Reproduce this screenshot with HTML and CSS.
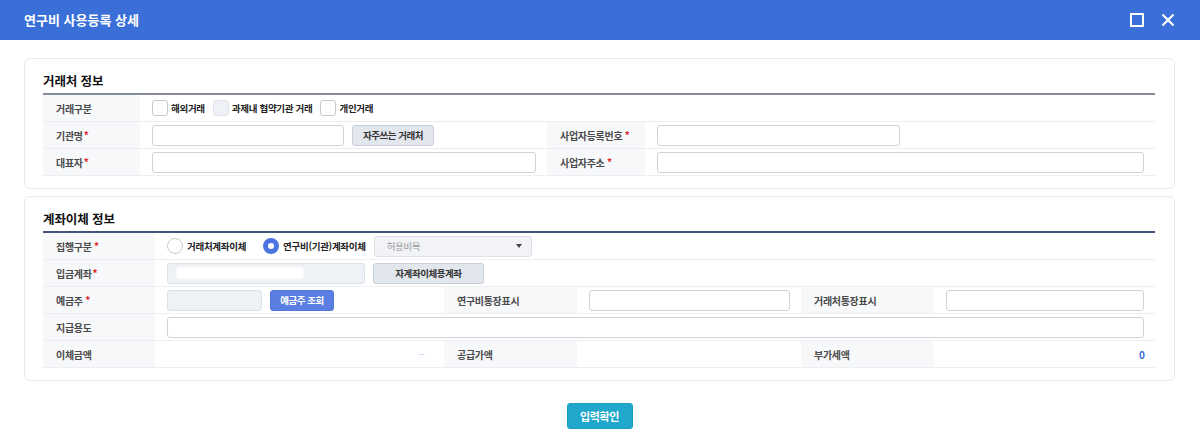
FILE: index.html
```html
<!DOCTYPE html>
<html lang="ko">
<head>
<meta charset="utf-8">
<title>연구비 사용등록 상세</title>
<link rel="stylesheet" href="styles.css">
</head>
<body>
<div class="dialog">
  <header class="titlebar">
    <h1>연구비 사용등록 상세</h1>
    <div class="win-actions">
      <svg width="14" height="14" viewBox="0 0 14 14"><rect x="1" y="1" width="12" height="12" fill="none" stroke="#fff" stroke-width="2"/></svg>
      <svg width="14" height="14" viewBox="0 0 14 14"><path d="M1.5 1.5L12.5 12.5M12.5 1.5L1.5 12.5" stroke="#fff" stroke-width="2.2" fill="none"/></svg>
    </div>
  </header>

  <main class="content">
    <section class="card">
      <h2 class="card-title">거래처 정보</h2>
      <div class="grid grid-vendor">
        <div class="th">거래구분</div>
        <div class="td span3">
          <span class="opt"><span class="chk"></span>해외거래</span>
          <span class="opt"><span class="chk chk-disabled"></span>과제내 협약기관 거래</span>
          <span class="opt"><span class="chk"></span>개인거래</span>
        </div>

        <div class="th">기관명<em class="req tight">*</em></div>
        <div class="td"><span class="input w192"></span><button class="btn btn-gray w82">자주쓰는 거래처</button></div>
        <div class="th">사업자등록번호 <em class="req">*</em></div>
        <div class="td"><span class="input w243"></span></div>

        <div class="th">대표자<em class="req tight">*</em></div>
        <div class="td"><span class="input fill"></span></div>
        <div class="th">사업자주소 <em class="req">*</em></div>
        <div class="td"><span class="input fill"></span></div>
      </div>
    </section>

    <section class="card">
      <h2 class="card-title">계좌이체 정보</h2>
      <div class="grid grid-transfer">
        <div class="th">집행구분 <em class="req">*</em></div>
        <div class="td span5">
          <span class="opt opt-radio spaced"><span class="radio"></span>거래처계좌이체</span>
          <span class="opt opt-radio"><span class="radio on"></span>연구비(기관)계좌이체</span>
          <span class="select"><span>허용비목</span><span class="caret"></span></span>
        </div>

        <div class="th">입금계좌<em class="req tight">*</em></div>
        <div class="td span5">
          <span class="input disabled masked w198"><span class="mask"></span></span>
          <button class="btn btn-gray w111">자계좌이체용계좌</button>
        </div>

        <div class="th">예금주 <em class="req">*</em></div>
        <div class="td">
          <span class="input disabled w95"></span>
          <button class="btn btn-blue w64">예금주 조회</button>
        </div>
        <div class="th">연구비통장표시</div>
        <div class="td"><span class="input fill"></span></div>
        <div class="th">거래처통장표시</div>
        <div class="td"><span class="input fill"></span></div>

        <div class="th">지급용도</div>
        <div class="td span5"><span class="input fill"></span></div>

        <div class="th">이체금액</div>
        <div class="td end dash-cell"><span class="dash">--</span></div>
        <div class="th">공급가액</div>
        <div class="td"></div>
        <div class="th">부가세액</div>
        <div class="td end zero-cell"><span class="zero">0</span></div>
      </div>
    </section>

    <div class="actions">
      <button class="btn-submit">입력확인</button>
    </div>
  </main>
</div>
</body>
</html>
```

FILE: styles.css
```css
* { box-sizing: border-box; }
html, body { margin: 0; padding: 0; background: #fff; }
body {
  width: 1200px;
  height: 447px;
  overflow: hidden;
  font-family: "Noto Sans CJK KR", "Noto Sans", sans-serif;
  color: #333;
}

.titlebar {
  height: 40px;
  background: #3a6fd8;
  display: flex;
  align-items: center;
  justify-content: space-between;
  padding: 0 25px 0 24px;
}
.titlebar h1 {
  margin: 0;
  color: #fff;
  font-size: 13px;
  font-weight: 700;
  line-height: 20px;
}
.win-actions { display: flex; align-items: center; gap: 17px; }
.win-actions svg { display: block; }

.content { padding: 18px 25px 0 24px; }

.card {
  border: 1px solid #e7e9ec;
  border-radius: 6px;
  padding: 12px 19px 12px 18px;
}
.card + .card { margin-top: 7px; }
.card-title {
  margin: 0 0 2px;
  font-size: 12.5px;
  line-height: 20px;
  font-weight: 700;
  color: #111;
  letter-spacing: -0.1px;
}

.grid { display: grid; border-top: 2px solid #868c97; }
.grid-vendor { grid-template-columns: 97px 407px 98px 1fr; }
.grid-transfer {
  grid-template-columns: 112px 289px 133px 224px 133px 1fr;
  border-top-color: #44547a;
}

.th, .td {
  height: 27px;
  border-bottom: 1px solid #eceef1;
  display: flex;
  align-items: center;
}
.th {
  background: #f7f8fa;
  padding-left: 13px;
  font-size: 10px;
  font-weight: 700;
  color: #4a4a4a;
  letter-spacing: -0.3px;
  white-space: pre;
}
.td { padding: 0 11px 0 12px; gap: 8px; }
.span3 { grid-column: span 3; }
.span5 { grid-column: span 5; }
.end { justify-content: flex-end; }

.req {
  font-style: normal;
  color: #e0262b;
  font-size: 10px;
  position: relative;
  top: -1px;
}
.req.tight { margin-left: 1px; }

.opt {
  display: flex;
  align-items: center;
  gap: 3px;
  font-size: 9.5px;
  font-weight: 700;
  color: #222;
  letter-spacing: -0.3px;
  white-space: pre;
}
.opt-radio { gap: 4px; }
.opt.spaced { margin-right: 9px; }

.chk {
  width: 16px;
  height: 16px;
  border: 1px solid #c6cad0;
  border-radius: 3px;
  background: #fff;
  flex: none;
}
.chk-disabled { background: #eef1f5; border-color: #dfe3e8; }

.radio {
  width: 16px;
  height: 16px;
  border-radius: 50%;
  border: 1px solid #c6cad0;
  background: #fff;
  flex: none;
}
.radio.on { border: 5px solid #4d74e0; }

.select {
  width: 158px;
  height: 21px;
  border: 1px solid #dde1e7;
  background: #f1f3f6;
  border-radius: 3px;
  display: flex;
  align-items: center;
  justify-content: space-between;
  padding: 0 9px 0 12px;
  font-size: 9.5px;
  color: #9a9a9a;
  letter-spacing: -0.4px;
}
.caret {
  width: 0;
  height: 0;
  border-left: 3px solid transparent;
  border-right: 3px solid transparent;
  border-top: 4px solid #444;
}

.input {
  display: block;
  height: 21px;
  border: 1px solid #cfd3d9;
  border-radius: 3px;
  background: #fff;
  flex: none;
}
.input.fill { flex: 1; }
.input.disabled { background: #eef1f5; border-color: #dde1e7; }
.input.masked { display: flex; align-items: center; padding-left: 8px; }
.mask {
  width: 128px;
  height: 12px;
  background: #fff;
  border-radius: 4px;
  filter: blur(1.2px);
}
.w192 { width: 192px; }
.w243 { width: 243px; }
.w198 { width: 198px; }
.w95 { width: 95px; }

.btn {
  height: 21px;
  border-radius: 3px;
  font-family: inherit;
  font-size: 9.5px;
  font-weight: 700;
  letter-spacing: -0.45px;
  padding: 0;
  display: flex;
  align-items: center;
  justify-content: center;
  flex: none;
}
.btn-gray { background: #e2e6ed; border: 1px solid #c9d0da; color: #333; }
.btn-blue { background: #5a7ee1; border: 1px solid #5278de; color: #fff; }
.w82 { width: 82px; }
.w111 { width: 111px; }
.w64 { width: 64px; }

.dash-cell { padding-right: 20px; }
.dash { font-size: 8px; color: #9fb6e8; }
.zero-cell { padding-right: 10px; }
.zero { font-size: 10px; font-weight: 700; color: #3b6fd8; }

.actions { display: flex; justify-content: center; margin-top: 22px; }
.btn-submit {
  width: 66px;
  height: 26px;
  background: #1fa7cc;
  border: 1px solid #1a9ec3;
  border-radius: 3px;
  color: #fff;
  font-family: inherit;
  font-size: 11px;
  font-weight: 700;
  letter-spacing: -0.4px;
  padding: 0;
}
```
